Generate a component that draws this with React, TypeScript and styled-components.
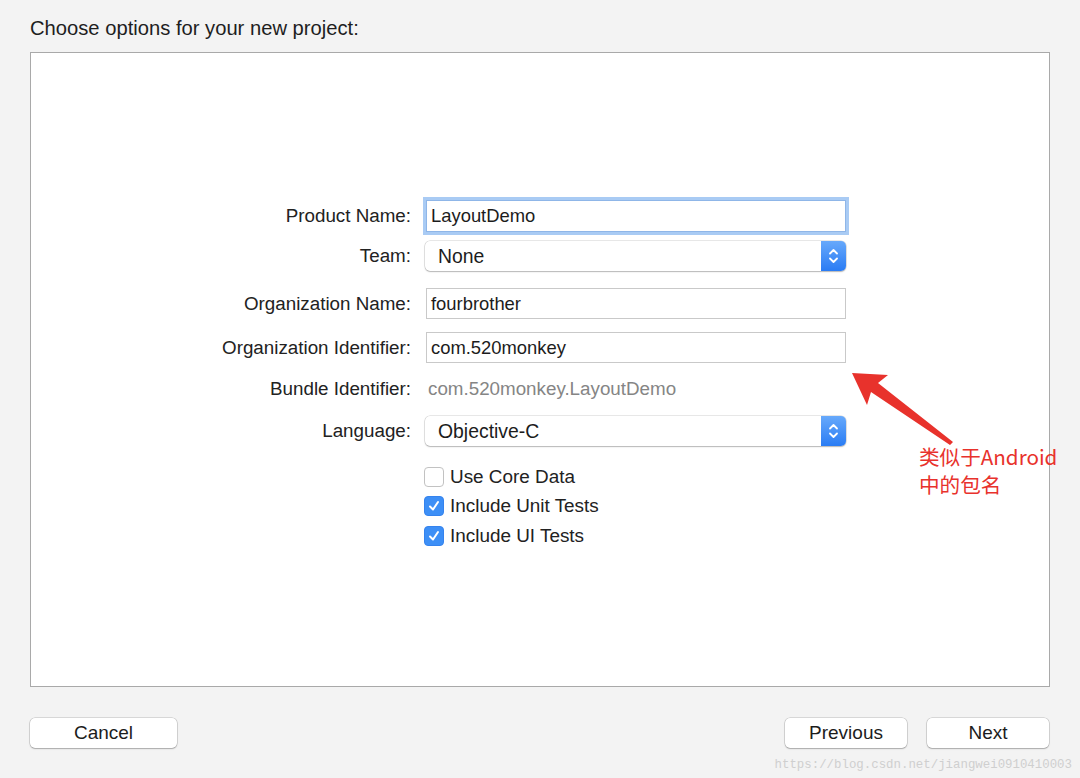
import styled, { createGlobalStyle } from "styled-components";

const GlobalStyle = createGlobalStyle`
  html, body {
    margin: 0;
    padding: 0;
    background: #f3f3f3;
  }
  body {
    font-family: "Liberation Sans", Arial, sans-serif;
    color: #262626;
  }
`;

const Page = styled.div`
  position: relative;
  width: 1080px;
  height: 778px;
  padding: 0 30px;
  box-sizing: border-box;
  overflow: hidden;
`;

const Heading = styled.h1`
  margin: 0;
  height: 52px;
  display: flex;
  align-items: center;
  padding-top: 4px;
  box-sizing: border-box;
  font-size: 20.2px;
  font-weight: normal;
  color: #1e1e1e;
`;

const Panel = styled.div`
  height: 635px;
  box-sizing: border-box;
  border: 1px solid #a9a9a9;
  background: #ffffff;
  padding-top: 147px;
`;

const Form = styled.div`
  display: flex;
  flex-direction: column;
`;

const Row = styled.div<{ $gap: number; $height: number }>`
  display: grid;
  grid-template-columns: 380px 420px;
  column-gap: 15px;
  align-items: center;
  margin-top: ${(p) => p.$gap}px;
  height: ${(p) => p.$height}px;
`;

const Label = styled.div`
  text-align: right;
  font-size: 18.8px;
  color: #222;
`;

const TextField = styled.div<{ $focused?: boolean }>`
  height: 100%;
  box-sizing: border-box;
  border: 1px solid ${(p) => (p.$focused ? "#8fb6e8" : "#c9c9c9")};
  box-shadow: ${(p) => (p.$focused ? "0 0 0 3px #a9cbf4" : "none")};
  background: #fff;
  display: flex;
  align-items: center;
  padding: 0 4px;
  font-size: 18.4px;
  color: #1c1c1c;
`;

const Static = styled.div`
  font-size: 18.8px;
  color: #858585;
  padding-left: 2px;
`;

const Popup = styled.div`
  height: 100%;
  box-sizing: border-box;
  margin-left: -1px;
  display: flex;
  align-items: stretch;
  border-radius: 5px;
  background: #fff;
  box-shadow: 0 0 0 0.5px rgba(0, 0, 0, 0.18), 0 1px 1.5px rgba(0, 0, 0, 0.22);
  overflow: hidden;
`;

const PopupText = styled.div`
  flex: 1;
  display: flex;
  align-items: center;
  padding-left: 13px;
  font-size: 19.4px;
  color: #1c1c1c;
`;

const Stepper = styled.div`
  width: 25px;
  display: flex;
  align-items: center;
  justify-content: center;
  background: linear-gradient(#67a9fb, #2a7cf4);
`;

const CheckRow = styled.div<{ $gap: number }>`
  display: grid;
  grid-template-columns: 380px 420px;
  column-gap: 13px;
  margin-top: ${(p) => p.$gap}px;
  height: 20px;
`;

const CheckLabel = styled.label`
  grid-column: 2;
  display: flex;
  align-items: center;
  gap: 6px;
  font-size: 18.9px;
  color: #222;
`;

const Box = styled.span<{ $checked?: boolean }>`
  width: 20px;
  height: 20px;
  box-sizing: border-box;
  border-radius: 4px;
  display: flex;
  align-items: center;
  justify-content: center;
  background: ${(p) => (p.$checked ? "#3d8ff6" : "#fff")};
  border: 1px solid ${(p) => (p.$checked ? "#3583ee" : "#c2c2c2")};
`;

const Footer = styled.div`
  display: flex;
  align-items: center;
  justify-content: space-between;
  margin-top: 31px;
`;

const ButtonGroup = styled.div`
  display: flex;
  gap: 20px;
  margin-right: 1px;
`;

const Button = styled.button<{ $width: number }>`
  width: ${(p) => p.$width}px;
  height: 30px;
  border-radius: 5px;
  border: none;
  background: #fff;
  box-shadow: 0 0 0 0.5px rgba(0, 0, 0, 0.22), 0 1px 1.5px rgba(0, 0, 0, 0.22);
  font-family: "Liberation Sans", Arial, sans-serif;
  font-size: 19px;
  color: #1c1c1c;
  padding: 0;
`;

const Annotation = styled.div`
  position: absolute;
  left: 919px;
  top: 442px;
  font-family: "Noto Sans CJK SC", sans-serif;
  font-size: 20.6px;
  line-height: 28px;
  color: #e8322c;
`;

const ArrowSvg = styled.svg`
  position: absolute;
  left: 845px;
  top: 365px;
`;

const Watermark = styled.div`
  position: absolute;
  right: 8px;
  bottom: 6px;
  font-family: "Liberation Mono", monospace;
  font-size: 12.4px;
  color: #cfcfcf;
`;

const Chevrons = () => (
  <svg width="11" height="18" viewBox="0 0 11 18">
    <path
      d="M2 6.5 L5.5 3 L9 6.5 M2 11.5 L5.5 15 L9 11.5"
      fill="none"
      stroke="#fff"
      strokeWidth="1.8"
      strokeLinecap="round"
      strokeLinejoin="round"
    />
  </svg>
);

const Check = () => (
  <svg width="14" height="14" viewBox="0 0 14 14">
    <path
      d="M3 7.5 L6 10.5 L11 3"
      fill="none"
      stroke="#fff"
      strokeWidth="2"
      strokeLinecap="round"
      strokeLinejoin="round"
    />
  </svg>
);

const checks = [
  { label: "Use Core Data", checked: false, gap: 20 },
  { label: "Include Unit Tests", checked: true, gap: 9 },
  { label: "Include UI Tests", checked: true, gap: 10 },
];

export default function App() {
  return (
    <>
      <GlobalStyle />
      <Page>
        <Heading>Choose options for your new project:</Heading>
        <Panel>
          <Form>
            <Row $gap={0} $height={32}>
              <Label>Product Name:</Label>
              <TextField $focused>LayoutDemo</TextField>
            </Row>
            <Row $gap={9} $height={30}>
              <Label>Team:</Label>
              <Popup>
                <PopupText>None</PopupText>
                <Stepper>
                  <Chevrons />
                </Stepper>
              </Popup>
            </Row>
            <Row $gap={17} $height={31}>
              <Label>Organization Name:</Label>
              <TextField>fourbrother</TextField>
            </Row>
            <Row $gap={13} $height={31}>
              <Label>Organization Identifier:</Label>
              <TextField>com.520monkey</TextField>
            </Row>
            <Row $gap={14} $height={24}>
              <Label>Bundle Identifier:</Label>
              <Static>com.520monkey.LayoutDemo</Static>
            </Row>
            <Row $gap={15} $height={30}>
              <Label>Language:</Label>
              <Popup>
                <PopupText>Objective-C</PopupText>
                <Stepper>
                  <Chevrons />
                </Stepper>
              </Popup>
            </Row>
            {checks.map((c) => (
              <CheckRow key={c.label} $gap={c.gap}>
                <CheckLabel>
                  <Box $checked={c.checked}>{c.checked && <Check />}</Box>
                  {c.label}
                </CheckLabel>
              </CheckRow>
            ))}
          </Form>
        </Panel>
        <Footer>
          <Button $width={147}>Cancel</Button>
          <ButtonGroup>
            <Button $width={122}>Previous</Button>
            <Button $width={122}>Next</Button>
          </ButtonGroup>
        </Footer>
        <ArrowSvg width="115" height="85" viewBox="0 0 115 85">
          <path
            d="M7 8 L43 10 L33 18 L108 77 L105 80 L26 27 L22 40 Z"
            fill="#e8322c"
          />
        </ArrowSvg>
        <Annotation>
          类似于Android
          <br />
          中的包名
        </Annotation>
        <Watermark>https://blog.csdn.net/jiangwei0910410003</Watermark>
      </Page>
    </>
  );
}
